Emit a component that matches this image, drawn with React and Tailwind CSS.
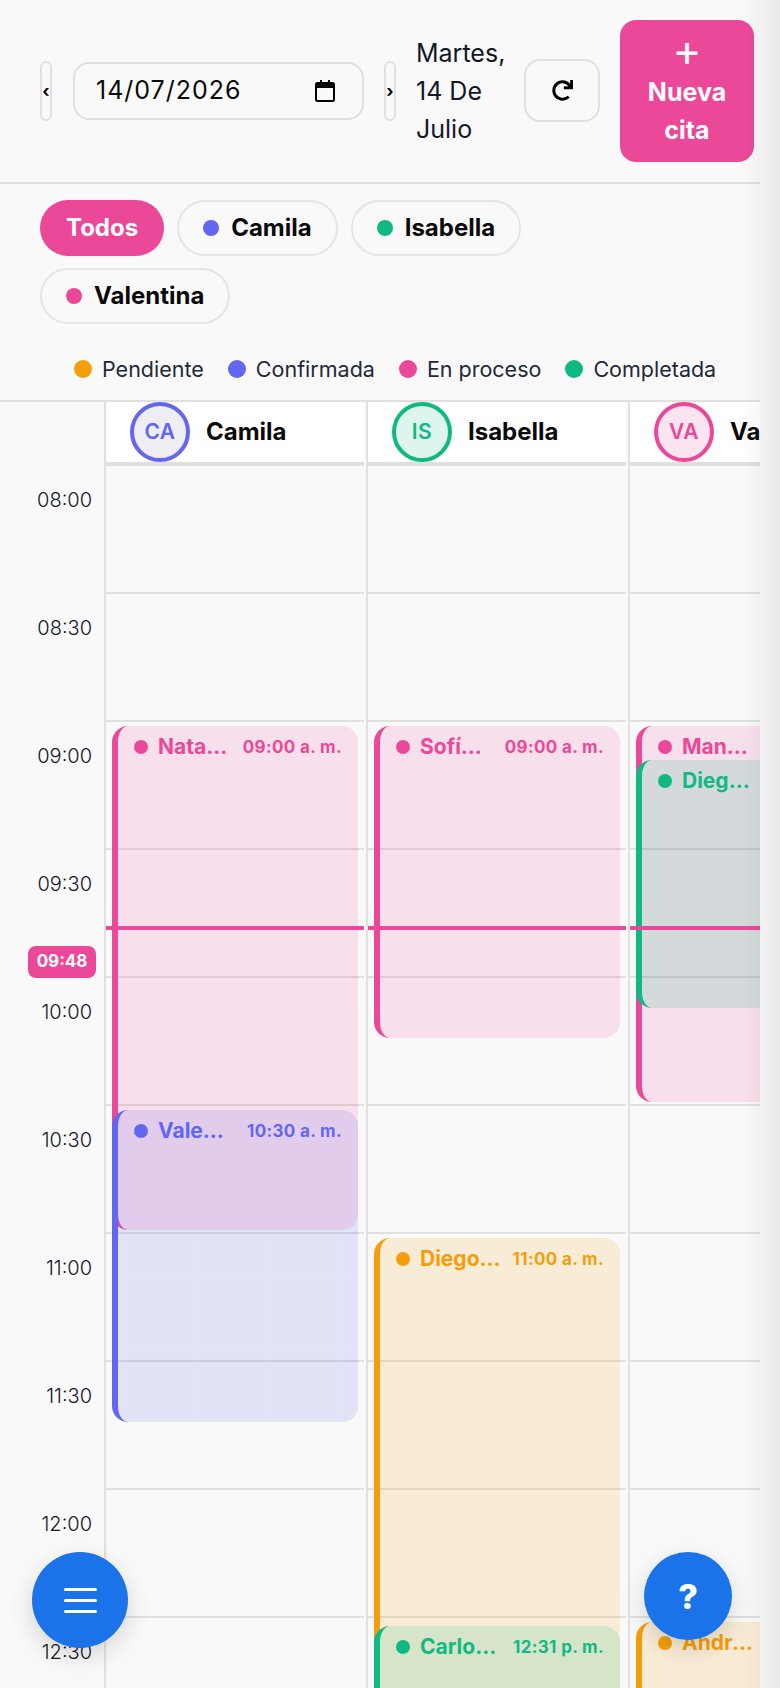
import React from "react";
import { FaRedo } from "react-icons/fa";

const C = {
  pink: { bar: "border-[#ec4899]", bg: "bg-[#ec4899]/15", text: "text-[#ec4899]", dot: "bg-[#ec4899]" },
  indigo: { bar: "border-[#6366f1]", bg: "bg-[#6366f1]/15", text: "text-[#6366f1]", dot: "bg-[#6366f1]" },
  green: { bar: "border-[#10b981]", bg: "bg-[#10b981]/15", text: "text-[#10b981]", dot: "bg-[#10b981]" },
  amber: { bar: "border-[#f59e0b]", bg: "bg-[#f59e0b]/15", text: "text-[#f59e0b]", dot: "bg-[#f59e0b]" },
};

const HOURS = ["08:00", "08:30", "09:00", "09:30", "10:00", "10:30", "11:00", "11:30", "12:00", "12:30"];

const COLS = [
  {
    name: "Camila", ini: "CA", ring: "border-[#6366f1]", fill: "bg-[#eeeef2]", txt: "text-[#6366f1]",
    events: [
      { name: "Natalia Gómez", time: "09:00 a. m.", c: C.pink, top: 260, h: 504 },
      { name: "Valentina Díaz", time: "10:30 a. m.", c: C.indigo, top: 644, h: 312, dots: true },
    ],
  },
  {
    name: "Isabella", ini: "IS", ring: "border-[#10b981]", fill: "bg-[#def5ee]", txt: "text-[#10b981]",
    events: [
      { name: "Sofía Martínez", time: "09:00 a. m.", c: C.pink, top: 260, h: 312 },
      { name: "Diego Herrera", time: "11:00 a. m.", c: C.amber, top: 772, h: 500 },
      { name: "Carlos Ramírez", time: "12:31 p. m.", c: C.green, top: 1160, h: 200 },
    ],
  },
  {
    name: "Valentina", ini: "VA", ring: "border-[#ec4899]", fill: "bg-[#fce4f0]", txt: "text-[#ec4899]",
    events: [
      { name: "Manuel Torres", time: "09:00 a. m.", c: C.pink, top: 260, h: 376 },
      { name: "Diego Morales", time: "09:15 a. m.", c: C.green, top: 294, h: 248 },
      { name: "Andrea López", time: "12:30 p. m.", c: C.amber, top: 1156, h: 200 },
    ],
  },
];

function Dot({ cls }) {
  return <span className={`rounded-full shrink-0 ${cls}`} />;
}

function Event({ e }) {
  return (
    <div
      style={{ top: e.top, height: e.h }}
      className={`absolute left-[6px] w-[246px] rounded-[16px] border-l-[6px] ${e.c.bar} ${e.c.bg} pl-[16px] pr-[16px] pt-[11px] overflow-hidden`}
    >
      {e.dots && (
        <div className="absolute inset-x-[6px] top-[130px] bottom-[6px] bg-[radial-gradient(#ec489930_0.5px,transparent_0.8px)] bg-[length:9px_9px]" />
      )}
      <div className="flex items-center h-[20px]">
        <Dot cls={`w-[14px] h-[14px] ${e.c.dot} mr-[10px]`} />
        <span className={`flex-1 min-w-0 truncate text-[21px] leading-[24px] font-bold ${e.c.text}`}>{e.name}</span>
        <span className={`shrink-0 ml-[12px] text-[17px] leading-[20px] font-bold tracking-[0.35px] ${e.c.text}`}>{e.time}</span>
      </div>
    </div>
  );
}

function Column({ col }) {
  return (
    <div className="relative w-[260px] shrink-0 mr-[2px] border-l-2 border-[#e0e0e0]">
      <div className="h-[64px] bg-white border-b-4 border-[#e0e0e0] flex items-center pl-[24px] gap-[16px]">
        <div className={`w-[60px] h-[60px] shrink-0 rounded-full border-4 ${col.ring} ${col.fill} ${col.txt} flex items-center justify-center text-[21px] font-semibold tracking-[0.5px]`}>
          {col.ini}
        </div>
        <span className="text-[24px] font-bold text-[#0a0a0a]">{col.name}</span>
      </div>
      <div className="relative">
        {HOURS.map((h) => (
          <div key={h} className="h-[128px] border-b-2 border-[#e0e0e0]" />
        ))}
        {col.events.map((e) => (
          <Event key={e.name} e={e} />
        ))}
        <div className="absolute left-0 right-0 top-[460px] h-[4px] bg-[#ec4899]" />
      </div>
    </div>
  );
}

function Chip({ dot, label }) {
  return (
    <div className="h-[56px] rounded-full border-2 border-[#e5e5e5] flex items-center gap-[12px] px-[24px] text-[24px] font-bold text-[#0a0a0a]">
      <Dot cls={`w-[16px] h-[16px] ${dot}`} />
      {label}
    </div>
  );
}

function Legend({ dot, label }) {
  return (
    <div className="flex items-center gap-[10px] text-[21.500px] text-[#1f2937]">
      <span className={`w-[18px] h-[18px] rounded-full ${dot}`} />
      {label}
    </div>
  );
}

export default function App() {
  return (
    <div className="w-[780px] h-[1688px] overflow-hidden bg-[#f9f9f9] font-['Inter','Liberation_Sans',sans-serif] relative">
      <div className="w-[760px] h-[1688px] bg-[#f9f9f9] overflow-hidden">
        <header className="h-[184px] border-b-2 border-[#e0e0e0] flex items-center pl-[40px] gap-[20px]">
          <button className="w-[12px] h-[60px] rounded-[6px] border-2 border-[#e0e0e0] flex items-center justify-center text-[17px] font-bold leading-none text-black">‹</button>
          <div className="w-[291px] h-[58px] ml-[1px] rounded-[16px] border-2 border-[#e0e0e0] flex items-center justify-between pl-[21px] pr-[27px] text-[25px] tracking-[1px] text-[#0a0a0a]">
            <span>14/07/2026</span>
            <svg width="20" height="22" viewBox="0 0 20 22"><path d="M5 0h2v2h6V0h2v2h2.5A2.5 2.5 0 0 1 20 4.5v15a2.5 2.5 0 0 1-2.5 2.5h-15A2.5 2.5 0 0 1 0 19.500v-15A2.500 2.500 0 0 1 2.500 2H5zM2 8v11.500c0 .3.2.5.5.5h15c.3 0 .5-.2.5-.5V8z" fill="#000" /></svg>
          </div>
          <button className="w-[12px] h-[60px] rounded-[6px] border-2 border-[#e0e0e0] flex items-center justify-center text-[17px] font-bold leading-none text-black">›</button>
          <div className="w-[88px] text-[25px] leading-[38px] text-[#111827]">Martes, 14 De Julio</div>
          <button className="w-[76px] h-[63px] mb-[2px] rounded-[16px] border-2 border-[#e0e0e0] flex items-center justify-center">
            <FaRedo size={21} color="#000" />
          </button>
          <button className="w-[134px] h-[142px] rounded-[16px] bg-[#ec4899] text-white font-bold text-[25px] leading-[38px] text-center flex flex-col items-center justify-start pt-[7px]">
            <span className="text-[44px] leading-[46px] font-normal">+</span>
            <span>Nueva</span>
            <span>cita</span>
          </button>
        </header>

        <div className="h-[216px] pt-[16px] pl-[40px]">
          <div className="flex flex-wrap gap-x-[13px] gap-y-[12px] w-[560px]">
            <div className="h-[56px] rounded-full bg-[#ec4899] text-white flex items-center px-[26px] text-[24px] font-bold">Todos</div>
            <Chip dot="bg-[#6366f1]" label="Camila" />
            <Chip dot="bg-[#10b981]" label="Isabella" />
            <Chip dot="bg-[#ec4899]" label="Valentina" />
          </div>
          <div className="flex gap-[24px] mt-[29px] pl-[34px]">
            <Legend dot="bg-[#f59e0b]" label="Pendiente" />
            <Legend dot="bg-[#6366f1]" label="Confirmada" />
            <Legend dot="bg-[#ec4899]" label="En proceso" />
            <Legend dot="bg-[#10b981]" label="Completada" />
          </div>
        </div>

        <div className="border-t-2 border-[#e0e0e0] flex relative">
          <div className="w-[104px] shrink-0 pt-[64px]">
            {HOURS.map((h) => (
              <div key={h} className="h-[128px] flex justify-end pr-[12px] pt-[20px] text-[20px] font-light leading-[28px] text-[#111827]">{h}</div>
            ))}
          </div>
          {COLS.map((c) => (
            <Column key={c.name} col={c} />
          ))}
          <div className="absolute left-[28px] top-[544px] w-[68px] h-[32px] rounded-[8px] bg-[#ec4899] text-white text-[17px] font-bold flex items-center justify-center">09:48</div>
        </div>
      </div>

      <div className="absolute right-0 top-0 w-[40px] h-[1688px] bg-gradient-to-r from-transparent to-black/[0.06]" />

      <button className="absolute left-[32px] top-[1552px] w-[96px] h-[96px] rounded-full bg-[#1a73e8] shadow-[0_8px_24px_rgba(0,0,0,0.15)] flex flex-col items-center justify-center gap-[8px]">
        <span className="block w-[33px] h-[3px] bg-white rounded-full" />
        <span className="block w-[33px] h-[3px] bg-white rounded-full" />
        <span className="block w-[33px] h-[3px] bg-white rounded-full" />
      </button>
      <button className="absolute left-[644px] top-[1552px] w-[88px] h-[88px] rounded-full bg-[#1a73e8] shadow-[0_8px_24px_rgba(0,0,0,0.15)] text-white text-[34px] font-extrabold flex items-center justify-center">?</button>
    </div>
  );
}
